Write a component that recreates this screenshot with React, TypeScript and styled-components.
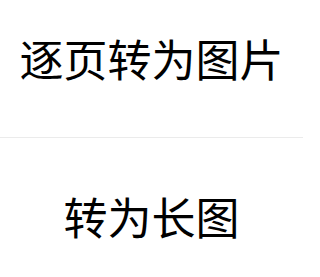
import styled, { createGlobalStyle } from "styled-components";

const GlobalStyle = createGlobalStyle`
   html, body {
      margin: 0;
      padding: 0;
      background: #ffffff;
   }
`;

const Sheet = styled.div`
   width: 303px;
   display: flex;
   flex-direction: column;
   background: #ffffff;
   font-family: "Noto Sans CJK SC", "Noto Sans", sans-serif;
   color: #000000;
`;

const Option = styled.div<{ $top: number; $bottom: number }>`
   display: flex;
   align-items: center;
   justify-content: center;
   padding: ${({ $top, $bottom }) => `${$top}px 0 ${$bottom}px`};
   font-size: 44px;
   line-height: 44px;
   white-space: nowrap;
`;

const Divider = styled.div`
   height: 1px;
   background: #ebebeb;
`;

const App = () => {
   return (
      <>
         <GlobalStyle />
         <Sheet>
            <Option $top={36} $bottom={57}>逐页转为图片</Option>
            <Divider />
            <Option $top={56} $bottom={39}>转为长图</Option>
         </Sheet>
      </>
   );
};

export default App;
